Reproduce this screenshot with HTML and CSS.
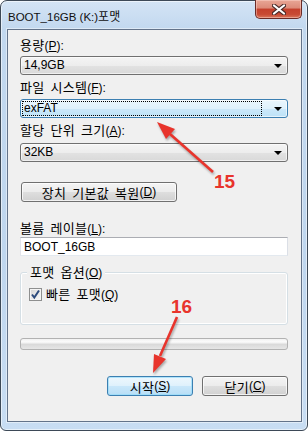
FILE: index.html
```html
<!DOCTYPE html>
<html lang="ko">
<head>
    <meta charset="UTF-8">
    <meta name="viewport" content="width=device-width, initial-scale=1.0">
    <title>BOOT_16GB (K:)포맷</title>
    <link rel="stylesheet" href="styles.css">
</head>
<body>
    <div class="window">
        <div class="titlebar">
            <span class="title">BOOT_16GB (K:)<span class="ko">포맷</span></span>
            <div class="close-btn">
                <svg width="14" height="11" viewBox="0 0 14 11">
                    <path d="M2 1.5 L12 9.5 M12 1.5 L2 9.5" stroke="#4a2a28" stroke-width="4.2" stroke-linecap="round"/>
                    <path d="M2 1.5 L12 9.5 M12 1.5 L2 9.5" stroke="#ffffff" stroke-width="2.2" stroke-linecap="round"/>
                </svg>
            </div>
        </div>

        <div class="client">
            <div class="label label-first"><span class="ko">용량</span>(<u>P</u>):</div>
            <div class="combo">
                <span class="combo-text">14,9GB</span>
                <span class="combo-arrow"></span>
            </div>

            <div class="label"><span class="ko">파일 시스템</span>(<u>F</u>):</div>
            <div class="combo combo-focus">
                <span class="combo-text focus-rect">exFAT</span>
                <span class="combo-arrow"></span>
            </div>

            <div class="label"><span class="ko">할당 단위 크기</span>(<u>A</u>):</div>
            <div class="combo combo-last">
                <span class="combo-text">32KB</span>
                <span class="combo-arrow"></span>
            </div>

            <div class="btn btn-restore"><span class="ko">장치 기본값 복원</span>(<u>D</u>)</div>

            <div class="label label-volume"><span class="ko">볼륨 레이블</span>(<u>L</u>):</div>
            <div class="textbox">BOOT_16GB</div>

            <div class="group">
                <span class="group-legend"><span class="ko">포맷 옵션</span>(<u>O</u>)</span>
                <div class="check-row">
                    <span class="checkbox">
                        <svg width="11" height="11" viewBox="0 0 11 11">
                            <path d="M2 5.5 L4.3 8.5 L9 1.5" fill="none" stroke="#2c4a7c" stroke-width="2"/>
                        </svg>
                    </span>
                    <span><span class="ko">빠른 포맷</span>(<u>Q</u>)</span>
                </div>
            </div>

            <div class="progress"></div>

            <div class="actions">
                <div class="btn btn-default"><span class="ko">시작</span>(<u>S</u>)</div>
                <div class="btn"><span class="ko">닫기</span>(<u>C</u>)</div>
            </div>
        </div>
    </div>

    <!-- annotation arrows drawn on top of the screenshot -->
    <svg class="annotations" width="308" height="431" viewBox="0 0 308 431">
        <g class="arrow">
            <line x1="213" y1="172" x2="170" y2="134" stroke="#e8342c" stroke-width="2.6"/>
            <polygon points="157,122 175,129 166,139" fill="#e8342c"/>
            <line x1="177" y1="317" x2="160" y2="356" stroke="#e8342c" stroke-width="2.6"/>
            <polygon points="153,373 166,359 154,354" fill="#e8342c"/>
        </g>
        <text x="214" y="188" class="note">15</text>
        <text x="171" y="313" class="note">16</text>
    </svg>
</body>
</html>
```

FILE: styles.css
```css
body {
    margin: 0;
    position: relative;
    width: 308px;
    height: 431px;
    font-family: "Liberation Sans", "Noto Sans CJK KR", sans-serif;
    font-size: 12px;
    color: #000;
    background: #ffffff;
}

u {
    text-decoration: underline;
    text-underline-offset: 1px;
}

.ko {
    font-family: "Noto Sans CJK KR", sans-serif;
    font-size: 13px;
    line-height: 1;
    letter-spacing: 0.3px;
    word-spacing: 2px;
}

.window {
    box-sizing: border-box;
    width: 308px;
    height: 431px;
    border: 1px solid #3d4957;
    border-radius: 7px 7px 6px 6px;
    padding: 0 5px 8px 6px;
    background: linear-gradient(180deg, #d4e4f5 0, #c2d8ef 28px, #bfd6ee 60%, #c8ddf3 100%);
    box-shadow: inset 0 0 0 1px rgba(255, 255, 255, 0.55);
}

.titlebar {
    height: 28px;
    display: flex;
}

.title {
    padding-left: 1px;
    padding-top: 9px;
    font-size: 11.5px;
    line-height: 13px;
    color: #111;
}

.title .ko {
    font-size: 12px;
    letter-spacing: 0;
}

.close-btn {
    margin-left: auto;
    margin-top: -1px;
    width: 47px;
    height: 19px;
    box-sizing: border-box;
    border: 1px solid #6a2b27;
    border-top: none;
    border-radius: 0 0 5px 5px;
    background: linear-gradient(180deg, #e8a696 0, #dc8a78 45%, #c4402c 50%, #c84a34 80%, #d9765c 100%);
    box-shadow: inset 0 0 0 1px rgba(255, 220, 210, 0.45);
    display: flex;
    align-items: center;
    justify-content: center;
}

.client {
    box-sizing: border-box;
    height: 393px;
    border: 1px solid #63738a;
    background: #f0f0f0;
    padding: 5px 13px 0 12px;
    box-shadow: 0 0 0 1px rgba(255, 255, 255, 0.45);
}

.label {
    height: 15px;
    line-height: 15px;
    margin-top: 5px;
    white-space: nowrap;
}

.label-first {
    margin-top: 2px;
    height: 17px;
    line-height: 19px;
}

.combo {
    box-sizing: border-box;
    height: 19px;
    margin-top: 4px;
    border: 1px solid #707070;
    border-radius: 3px;
    background: linear-gradient(180deg, #f4f4f4 0, #ededed 50%, #e2e2e2 52%, #d9d9d9 100%);
    box-shadow: inset 0 0 0 1px rgba(255, 255, 255, 0.6);
    display: flex;
    align-items: center;
    padding: 0 5px 0 3px;
}

.label-first + .combo {
    margin-top: 2px;
}

.combo-last {
    margin-top: 5px;
}

.combo-focus {
    border-color: #3c7fb1;
    background: linear-gradient(180deg, #eaf6fd 0, #dff1fc 50%, #cbe8fa 52%, #bde2f7 100%);
}

.combo-text {
    flex: 1;
    line-height: 13px;
}

.focus-rect {
    margin-left: -1px;
    padding-left: 1px;
    margin-right: 13px;
    outline: 1px dotted #000;
}

.combo-arrow {
    width: 0;
    height: 0;
    border-left: 4px solid transparent;
    border-right: 4px solid transparent;
    border-top: 4px solid #000;
    margin-top: 1px;
}

.btn {
    box-sizing: border-box;
    height: 20px;
    width: 86px;
    border: 1px solid #707070;
    border-radius: 3px;
    background: linear-gradient(180deg, #f4f4f4 0, #ececec 48%, #dedede 52%, #d1d1d1 100%);
    box-shadow: inset 0 0 0 1px rgba(255, 255, 255, 0.7);
    display: flex;
    align-items: center;
    justify-content: center;
    line-height: 14px;
    white-space: nowrap;
}

.btn-restore {
    width: 156px;
    margin: 20px 0 0 1px;
}

.btn-default {
    border-color: #3c7fb1;
    background: linear-gradient(180deg, #eef7fd 0, #dff1fc 48%, #c9e7fa 52%, #b8def6 100%);
    box-shadow: inset 0 0 0 1px rgba(150, 220, 250, 0.7);
}

.label-volume {
    margin-top: 19px;
}

.textbox {
    box-sizing: border-box;
    height: 19px;
    margin-top: 1px;
    border: 1px solid;
    border-color: #abadb3 #dbdfe6 #e3e9ef #e2e3ea;
    background: #fff;
    padding: 2px 0 0 3px;
    line-height: 14px;
}

.group {
    position: relative;
    box-sizing: border-box;
    height: 53px;
    margin-top: 16px;
    border: 1px solid #d5dfe5;
    border-radius: 3px;
    box-shadow: inset 0 0 0 1px #fff;
    padding: 14px 0 0 8px;
}

.group-legend {
    position: absolute;
    top: -8px;
    left: 6px;
    padding: 0 3px;
    line-height: 15px;
    background: #f0f0f0;
}

.check-row {
    display: flex;
    align-items: center;
    gap: 4px;
    line-height: 13px;
}

.checkbox {
    box-sizing: border-box;
    width: 13px;
    height: 13px;
    border: 1px solid #8e8f8f;
    background: linear-gradient(135deg, #d4d4d4 0, #ebebeb 60%, #f8f8f8 100%);
    box-shadow: inset 0 0 0 1px #f4f4f4;
    display: flex;
    align-items: center;
    justify-content: center;
}

.progress {
    box-sizing: border-box;
    height: 12px;
    margin-top: 13px;
    border: 1px solid #b2b2b2;
    border-radius: 3px;
    background: linear-gradient(180deg, #f2f2f2 0, #fbfbfb 30%, #dadada 55%, #e6e6e6 100%);
}

.actions {
    display: flex;
    justify-content: flex-end;
    gap: 9px;
    margin-top: 26px;
}

.annotations {
    position: absolute;
    top: 0;
    left: 0;
    pointer-events: none;
}

.arrow {
    filter: drop-shadow(1px 2px 1px rgba(0, 0, 0, 0.3));
}

.note {
    font-family: "Liberation Sans", sans-serif;
    font-weight: bold;
    font-size: 19px;
    fill: #e8342c;
}
```
